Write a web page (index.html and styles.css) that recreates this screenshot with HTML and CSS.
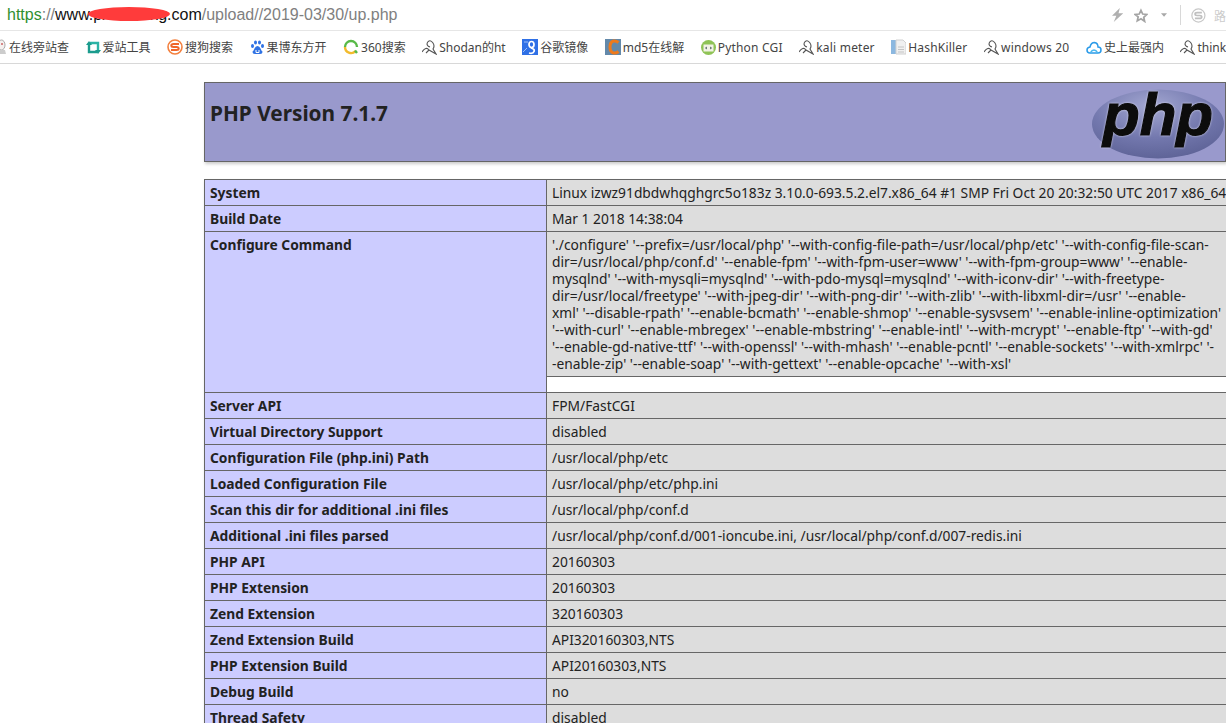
FILE: index.html
```html
<!DOCTYPE html>
<html lang="en">

<head>
    <meta charset="UTF-8">
    <meta name="viewport" content="width=device-width, initial-scale=1.0">
    <title>phpinfo()</title>
    <link rel="stylesheet" href="styles.css">
</head>

<body>
    <div class="addr">
        <div class="url"><span class="scheme">https</span><span class="path">://</span>www.pxxxxxxxg.com<span class="path">/upload//2019-03/30/up.php</span><i class="blot"></i></div>
        <div class="addr-tools">
            <svg class="bolt" width="13" height="16" viewBox="0 0 13 16"><path d="M9 0 0 9h5l-3 7 11-10H7.500z" fill="#b0b0b0"/></svg>
            <svg class="star" width="16" height="15" viewBox="0 0 16 15"><path d="M8 1.500l2 4.300 4.800.5-3.600 3.200 1 4.700L8 11.300l-4.200 2.400 1-4.700L1.200 6.300 6 5.800z" fill="none" stroke="#a4a4a4" stroke-width="2"/></svg>
            <svg class="caret" width="7" height="4" viewBox="0 0 7 4"><path d="M0 0h7L3.500 4z" fill="#a8a8a8"/></svg>
            <i class="sep"></i>
            <svg class="sogou" width="17" height="17" viewBox="0 0 17 17"><circle cx="8.500" cy="8.500" r="7.500" fill="none" stroke="#c8c8c8" stroke-width="1.400"/><path d="M12.500 5.300H7Q4.700 5.300 4.700 6.900T7 8.500h3q2.300 0 2.300 1.600T10 11.700H4.500" fill="none" stroke="#c0c0c0" stroke-width="2"/></svg>
            <span class="cut">路</span>
        </div>
    </div>

    <div class="marks">
        <a class="mark first"><svg width="7" height="16" viewBox="0 0 7 16"><ellipse cx="1.500" cy="6" rx="3.500" ry="5" fill="#f4f0ee" stroke="#aaa"/><circle cx="2" cy="5" r="1" fill="#c66"/><path d="M0 11h5l1 4H0z" fill="#ccc"/></svg>在线旁站查</a>
        <a class="mark"><svg width="15" height="15" viewBox="0 0 15 15"><path d="M3 3v9h8" fill="none" stroke="#1b9c8e" stroke-width="2.400"/><path d="M12 12V3H4" fill="none" stroke="#2bb3a6" stroke-width="2.400"/><path d="M0 5l3-4 3 4zM9 10l3 4 3-4z" fill="#1b9c8e"/></svg>爱站工具</a>
        <a class="mark"><svg width="16" height="16" viewBox="0 0 16 16"><circle cx="8" cy="8" r="7" fill="#fff" stroke="#f4803e" stroke-width="1.600"/><path d="M12 5H6.500Q4.300 5 4.300 6.500T6.500 8h3q2.200 0 2.200 1.500T9.500 11H4" fill="none" stroke="#f0662a" stroke-width="2"/></svg>搜狗搜索</a>
        <a class="mark"><svg width="15" height="15" viewBox="0 0 15 15" fill="#2f72e4"><ellipse cx="2.500" cy="6" rx="1.500" ry="2"/><ellipse cx="5.500" cy="2.500" rx="1.500" ry="2"/><ellipse cx="9.500" cy="2.500" rx="1.500" ry="2"/><ellipse cx="12.500" cy="6" rx="1.500" ry="2"/><path d="M7.500 6q2 0 3 2.500t2 3q0 2.500-2.500 2.500h-5Q2.500 14 2.500 11.500q1-.5 2-3T7.500 6z"/><path d="M6 10v2.500h3V10" fill="none" stroke="#fff"/></svg>果博东方开</a>
        <a class="mark"><svg width="16" height="16" viewBox="0 0 16 16" fill="none" stroke-width="2.400"><path d="M14 8A6 6 0 0 0 2 8" stroke="#58b948"/><path d="M2 8a6 6 0 0 0 10.500 4" stroke="#f2bb2e"/><path d="M12 11.500l2 2.500" stroke="#58b948"/></svg>360搜索</a>
        <a class="mark"><svg width="15" height="15" viewBox="0 0 15 15" fill="none" stroke="#555" stroke-width="1.100"><path d="M0 12q4-6 7-2l7 4-3-5q2-3 0-6T7 1 5 4q0 2 3 3"/><path d="M7 10l-3 3"/></svg>Shodan的ht</a>
        <a class="mark"><svg width="16" height="16" viewBox="0 0 16 16"><path d="M0 0h16v16H0z" fill="#2f70e6"/><path d="M1 13l4-4M2 3h4" stroke="#9dbdf5"/><ellipse cx="9.500" cy="5.500" rx="2.500" ry="3" fill="none" stroke="#fff" stroke-width="1.700"/><path d="M9 9q4 1 3 3.500T7 14" fill="none" stroke="#fff" stroke-width="1.800"/></svg>谷歌镜像</a>
        <a class="mark"><svg width="16" height="16" viewBox="0 0 16 16"><path d="M0 0h16v16H0z" fill="#6389aa"/><path d="M13.500 3.500Q11 1.500 8.500 2 5 3 5 8t3.500 6q2.500.5 5-1.500" fill="none" stroke="#ee7a1c" stroke-width="3"/></svg>md5在线解</a>
        <a class="mark lat"><svg width="15" height="15" viewBox="0 0 15 15"><circle cx="7.500" cy="7.500" r="7.500" fill="#8fc356"/><path d="M2.500 4.500h10v7h-10z" fill="#f2f2e6"/><path d="M6 7 4.500 8 6 9M9 7l1.500 1L9 9" fill="none" stroke="#566"/></svg>Python CGI</a>
        <a class="mark lat"><svg width="15" height="15" viewBox="0 0 15 15" fill="none" stroke="#555" stroke-width="1.100"><path d="M0 12q4-6 7-2l7 4-3-5q2-3 0-6T7 1 5 4q0 2 3 3"/><path d="M7 10l-3 3"/></svg>kali meter</a>
        <a class="mark lat"><svg width="15" height="16" viewBox="0 0 15 16"><path d="M0 1h5v14H0z" fill="#8cb8e0"/><path d="M5 1h7l3 3v11H5z" fill="#f0f0f0" stroke="#d0d0d0"/><path d="M7 8h6M7 10.500h6M7 13h6" stroke="#c4c4c4"/></svg>HashKiller</a>
        <a class="mark lat"><svg width="15" height="15" viewBox="0 0 15 15" fill="none" stroke="#555" stroke-width="1.100"><path d="M0 12q4-6 7-2l7 4-3-5q2-3 0-6T7 1 5 4q0 2 3 3"/><path d="M7 10l-3 3"/></svg>windows 20</a>
        <a class="mark"><svg width="16" height="13" viewBox="0 0 16 13"><path d="M4 12Q1 12 1 9q0-2.500 3-3Q5 1.500 8.500 1.500 12 2 12 6q3 0 3 3t-3 3z" fill="none" stroke="#2a9ae8" stroke-width="1.500"/><path d="M4 12q4-6 8 0" fill="none" stroke="#47b6f0" stroke-width="1.300"/></svg>史上最强内</a>
        <a class="mark"><svg width="15" height="15" viewBox="0 0 15 15" fill="none" stroke="#555" stroke-width="1.100"><path d="M0 12q4-6 7-2l7 4-3-5q2-3 0-6T7 1 5 4q0 2 3 3"/><path d="M7 10l-3 3"/></svg>thinkphp</a>
    </div>

    <div class="page">
        <div class="head">
            <h1>PHP Version 7.1.7</h1>
            <svg class="logo" width="134" height="72" viewBox="0 0 134 72">
                <defs>
                    <radialGradient id="blob" cx="45%" cy="25%" r="75%">
                        <stop offset="0" stop-color="#a4a8d2"/>
                        <stop offset="0.600" stop-color="#7378ae"/>
                        <stop offset="1" stop-color="#5f6498"/>
                    </radialGradient>
                </defs>
                <ellipse cx="67" cy="36" rx="66" ry="34.500" fill="url(#blob)"/>
                <text x="67" y="47" class="logo-text">php</text>
            </svg>
        </div>

        <table class="info">
            <tr><td class="e">System</td><td class="v">Linux izwz91dbdwhqghgrc5o183z 3.10.0-693.5.2.el7.x86_64 #1 SMP Fri Oct 20 20:32:50 UTC 2017 x86_64</td></tr>
            <tr><td class="e">Build Date</td><td class="v">Mar 1 2018 14:38:04</td></tr>
            <tr>
                <td class="e" rowspan="2">Configure Command</td>
                <td class="v">'./configure' '--prefix=/usr/local/php' '--with-config-file-path=/usr/local/php/etc' '--with-config-file-scan-<br>dir=/usr/local/php/conf.d' '--enable-fpm' '--with-fpm-user=www' '--with-fpm-group=www' '--enable-<br>mysqlnd' '--with-mysqli=mysqlnd' '--with-pdo-mysql=mysqlnd' '--with-iconv-dir' '--with-freetype-<br>dir=/usr/local/freetype' '--with-jpeg-dir' '--with-png-dir' '--with-zlib' '--with-libxml-dir=/usr' '--enable-<br>xml' '--disable-rpath' '--enable-bcmath' '--enable-shmop' '--enable-sysvsem' '--enable-inline-optimization'<br>'--with-curl' '--enable-mbregex' '--enable-mbstring' '--enable-intl' '--with-mcrypt' '--enable-ftp' '--with-gd'<br>'--enable-gd-native-ttf' '--with-openssl' '--with-mhash' '--enable-pcntl' '--enable-sockets' '--with-xmlrpc' '-<br>-enable-zip' '--enable-soap' '--with-gettext' '--enable-opcache' '--with-xsl'</td>
            </tr>
            <tr><td class="blank"></td></tr>
            <tr><td class="e">Server API</td><td class="v">FPM/FastCGI</td></tr>
            <tr><td class="e">Virtual Directory Support</td><td class="v">disabled</td></tr>
            <tr><td class="e">Configuration File (php.ini) Path</td><td class="v">/usr/local/php/etc</td></tr>
            <tr><td class="e">Loaded Configuration File</td><td class="v">/usr/local/php/etc/php.ini</td></tr>
            <tr><td class="e">Scan this dir for additional .ini files</td><td class="v">/usr/local/php/conf.d</td></tr>
            <tr><td class="e">Additional .ini files parsed</td><td class="v">/usr/local/php/conf.d/001-ioncube.ini, /usr/local/php/conf.d/007-redis.ini</td></tr>
            <tr><td class="e">PHP API</td><td class="v">20160303</td></tr>
            <tr><td class="e">PHP Extension</td><td class="v">20160303</td></tr>
            <tr><td class="e">Zend Extension</td><td class="v">320160303</td></tr>
            <tr><td class="e">Zend Extension Build</td><td class="v">API320160303,NTS</td></tr>
            <tr><td class="e">PHP Extension Build</td><td class="v">API20160303,NTS</td></tr>
            <tr><td class="e">Debug Build</td><td class="v">no</td></tr>
            <tr><td class="e">Thread Safety</td><td class="v">disabled</td></tr>
        </table>
    </div>
</body>

</html>
```

FILE: styles.css
```css
html, body {
    height: 723px;
    overflow: hidden;
}

body {
    margin: 0;
    background: #fff;
    color: #222;
    font-family: "Noto Sans", sans-serif;
}

.addr {
    display: flex;
    align-items: center;
    justify-content: space-between;
    height: 30px;
    border-bottom: 1px solid #e6e6e6;
}

.url {
    position: relative;
    padding-left: 7px;
    font: 16px "Liberation Sans", sans-serif;
    color: #111;
}

.scheme {
    color: #2f8f2f;
}

.path {
    color: #808080;
}

.blot {
    position: absolute;
    left: 88px;
    top: 1px;
    width: 82px;
    height: 14px;
    border-radius: 50%;
    background: #ff3b3b;
}

.addr-tools {
    display: flex;
    align-items: center;
    width: 114px;
    flex: none;
    overflow: hidden;
    color: #ccc;
    font: 12px "Noto Sans CJK SC", sans-serif;
}

.bolt {
    margin-right: 11px;
}

.star {
    margin-right: 13px;
}

.caret {
    margin-right: 13px;
}

.sep {
    width: 1px;
    height: 20px;
    margin-right: 10px;
    background: #d8d8d8;
}

.sogou {
    margin-right: 8px;
}

.marks {
    display: flex;
    align-items: center;
    height: 32px;
    border-bottom: 1px solid #d8d8d8;
    white-space: nowrap;
    overflow: hidden;
    font: 12px "Noto Sans", "Noto Sans CJK SC", sans-serif;
    color: #444;
}

.mark {
    display: flex;
    align-items: center;
    gap: 2px;
    margin-left: 16.5px;
}

.mark.first {
    margin-left: 0;
}

.lat {
    letter-spacing: 0.2px;
}

.page {
    padding: 18px 0 0 204px;
}

.head {
    display: flex;
    justify-content: space-between;
    width: 1022px;
    height: 80px;
    box-sizing: border-box;
    padding: 4px 0 0 5px;
    border: 1px solid #666;
    background: #99c;
    box-shadow: 1px 2px 3px #ccc;
}

h1 {
    margin: 12px 0 0;
    font-size: 20.8px;
    font-weight: bold;
    line-height: 28px;
    color: #222;
}

.logo {
    margin-top: 1px;
    flex: none;
}

.logo-text {
    font: italic bold 60px "Liberation Sans", sans-serif;
    text-anchor: middle;
    fill: #0c0c0c;
    stroke: #0c0c0c;
    stroke-width: 1.2px;
    filter: drop-shadow(0 0 1px #d8d9ee);
}

.info {
    width: 1100px;
    margin-top: 17px;
    border-collapse: collapse;
    table-layout: fixed;
    box-shadow: 1px 2px 3px #ccc;
    font-size: 13.8px;
    line-height: 17px;
}

.info td {
    padding: 4px 5px;
    border: 1px solid #666;
    vertical-align: baseline;
}

.e {
    width: 331px;
    background: #ccf;
    font-weight: bold;
}

.v {
    background: #ddd;
    white-space: nowrap;
    overflow: hidden;
}

.info .blank {
    height: 15px;
    padding: 0;
    background: #fff;
}
```
